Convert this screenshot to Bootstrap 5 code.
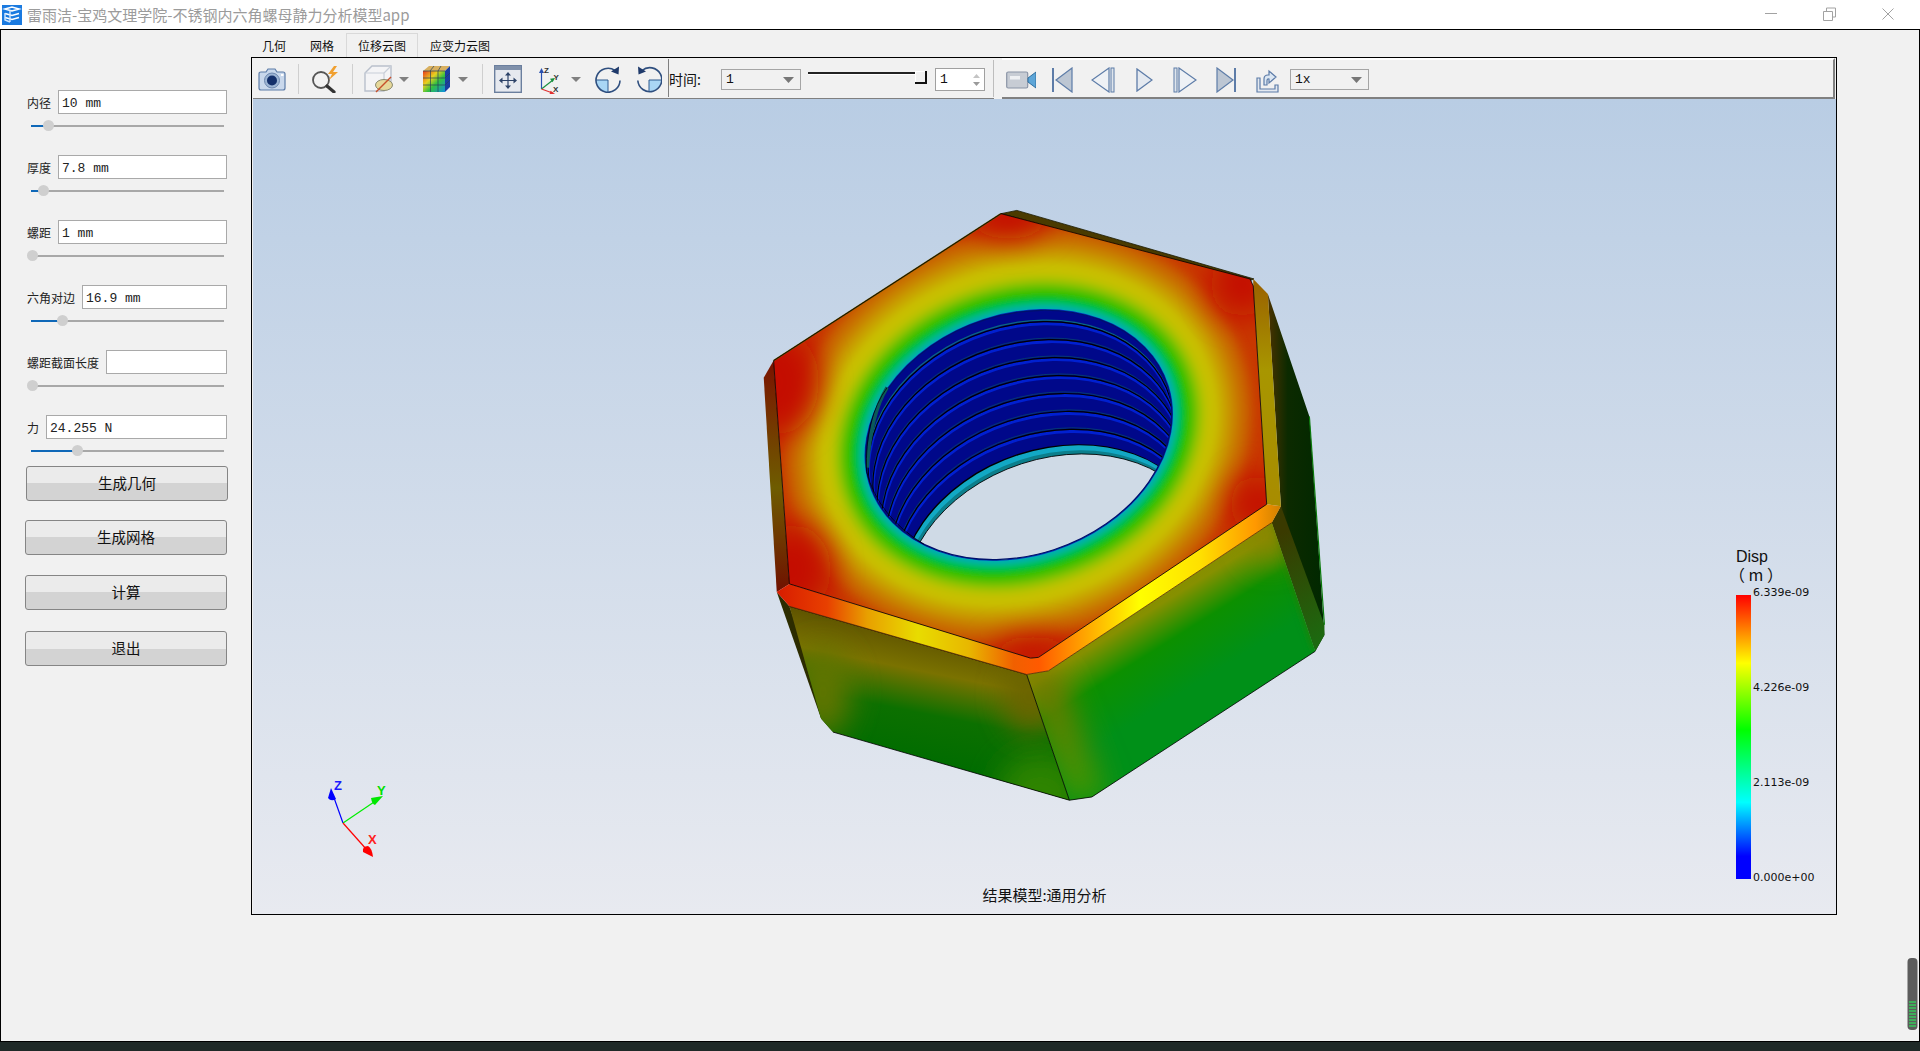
<!DOCTYPE html>
<html lang="zh-CN">
<head>
  <meta charset="UTF-8">
  <title>雷雨洁-宝鸡文理学院-不锈钢内六角螺母静力分析模型app</title>
  <link href="https://cdn.jsdelivr.net/npm/bootstrap@5.3.0/dist/css/bootstrap.min.css" rel="stylesheet">
  <style>
    html, body { height: 100%; }
    body { background: #f1f1f1; overflow: hidden; color: #111; font-family: "Noto Sans CJK SC", "Liberation Sans", sans-serif; font-size: 12px; }
    .app-win { height: 1051px; position: relative; }

    /* title bar */
    .title-bar { height: 29px; background: #fff; color: #9b9b9b; font-size: 15px; padding-left: 2px; }
    .title-bar .ttl { margin-left: 5px; line-height: 29px; white-space: nowrap; }
    .win-btns { margin-left: auto; }
    .win-btns svg { display: block; }

    .app-body { height: 1012px; border: 1px solid #000; border-bottom: 0; background: #f1f1f1; }
    .task-bar { height: 10px; background: #1f2927; border-top: 1px solid #000; }

    /* left form */
    .side-panel { width: 250px; flex: none; padding-top: 60px; }
    .param-row { height: 24px; padding-left: 26px; padding-right: 24px; }
    .param-row label { margin-right: 7px; white-space: nowrap; line-height: 25px; color: #222; }
    .param-row .form-control { height: 24px; min-height: 0; flex: 1 1 0; width: 0; padding: 2px 3px 0; border: 1px solid #a9a9a9; border-radius: 0; font-family: "Liberation Mono", monospace; font-size: 13px; color: #222; }
    .sld { height: 11px; margin: 6px 27px 24px 30px; display: flex; align-items: center; background: linear-gradient(#a8a8a8, #a8a8a8) center / 100% 2px no-repeat; }
    .sld-fill { height: 2px; background: #0f68b8; flex: none; }
    .sld-knob { width: 11px; height: 11px; border-radius: 50%; background: #cfcfcf; margin-left: -5px; flex: none; }
    .two-tone { display: block; width: 202px; height: 35px; padding: 0 0 2px; border: 1px solid #858585; border-radius: 3px; color: #111; font-size: 14.5px; background: linear-gradient(#ebebeb 50%, #d3d3d3 50%); }
    .b1 { margin: -14px 0 0 25px; }
    .b2 { margin: 19px 0 0 24px; }
    .b3 { margin: 20px 0 0 24px; }
    .b4 { margin: 21px 0 0 24px; }

    /* tabs */
    .main-col { width: 1586px; flex: none; }
    .nav-tabs.tab-strip { height: 27px; padding-top: 3px; border: 0; margin-left: -1px; flex-wrap: nowrap; }
    .tab-strip .nav-link { height: 25px; padding: 0 11px; line-height: 23px; font-size: 12px; color: #111; border: 1px solid transparent; border-bottom: 0; border-radius: 0; margin: 0; }
    .tab-strip .nav-link.active { background: #f1f1f1; border-color: #d9d9d9; color: #111; }

    .view-frame { height: 858px; border: 1px solid #000; padding-left: 1px; background: #f1f1f1; }
    .tool-bar { height: 41px; flex: none; }
    .tb-left { border-bottom: 1px solid #808080; height: 100%; padding-top: 2px; }
    .tb-mid { border-bottom: 1px solid #808080; height: 100%; padding-top: 3px; }
    .tb-right { flex: 1 1 0; height: 100%; margin-right: 1px; border-top: 2px solid #fff; border-bottom: 2px solid #808080; border-right: 2px solid #808080; padding-top: 2px; }
    .tb-left svg, .tb-right svg { flex: none; display: block; }
    .tsep { width: 1px; height: 30px; background: #cfcfcf; flex: none; }
    .tsep-dark { width: 1px; height: 100%; margin-top: -2px; background: #808080; flex: none; }
    .tsep-light { width: 1px; height: 100%; margin-top: -3px; background: #bdbdbd; flex: none; }
    .tm4 { margin-left: 4px; } .tm5 { margin-left: 5px; } .tm6 { margin-left: 6px; } .tm7 { margin-left: 7px; }
    .tm8 { margin-left: 8px; } .tm9 { margin-left: 9px; } .tm10 { margin-left: 10px; } .tm11 { margin-left: 11px; }
    .tm12 { margin-left: 12px; } .tm14 { margin-left: 14px; } .tm16 { margin-left: 16px; } .tm18 { margin-left: 18px; }
    .tm19 { margin-left: 19px; } .tm20 { margin-left: 20px; } .tm21 { margin-left: 21px; }
    .time-lbl { font-size: 14px; white-space: nowrap; width: 42px; flex: none; }
    .form-select.tb-combo { height: 21px; min-height: 0; flex: none; padding: 0 0 0 4px; border: 1px solid #a5a5a5; border-radius: 0; font-family: "Liberation Mono", monospace; font-size: 13px; line-height: 19px; color: #111; background-color: #f1f1f1; background-position: right 6px center; background-size: 11px 6px; background-image: url("data:image/svg+xml,%3csvg xmlns='http://www.w3.org/2000/svg' viewBox='0 0 11 6'%3e%3cpath fill='%23777' d='M0 0h11L5.500 6z'/%3e%3c/svg%3e"); }
    .combo-a { width: 80px; }
    .combo-b { width: 79px; }
    .time-slider { width: 119px; height: 14px; flex: none; display: flex; align-self: center; margin-top: -3px; }
    .time-groove { flex: 1 1 0; height: 2px; margin-top: 1px; background: #222; box-shadow: 0 1px 0 #fff; }
    .time-handle { width: 12px; height: 13px; background: #f1f1f1; border-right: 2px solid #111; border-bottom: 2px solid #111; box-shadow: inset 1px 1px 0 #fff; }
    .spin-box { width: 50px; height: 23px; flex: none; background: #fff; border: 1px solid #a0a0a0; padding-left: 4px; font-family: "Liberation Mono", monospace; font-size: 13px; line-height: 22px; }

    /* 3d view */
    .view-canvas { flex: 1 1 0; position: relative; overflow: hidden; background: linear-gradient(#b9cde4, #e8eaf0); }
    .nut-svg { position: absolute; left: 487px; top: 91px; }
    .triad-svg { position: absolute; left: 50px; top: 670px; }
    .legend-box { position: absolute; left: 1483px; top: 449px; color: #111; }
    .legend-ttl { font-family: "Liberation Sans", sans-serif; font-size: 16px; line-height: 18px; height: 17px; white-space: nowrap; }
    .legend-unit { font-family: "Noto Sans CJK SC", sans-serif; margin-left: -7px; }
    .legend-bar { width: 15px; height: 284px; margin-top: 13px; flex: none; background: linear-gradient(#f00 0%, #ff0 24%, #0f0 47.5%, #0ff 73%, #00f 92%, #00f 100%); }
    .legend-vals { height: 297px; margin: 5px 0 0 2px; font-family: "DejaVu Sans", sans-serif; font-size: 11px; line-height: 12px; white-space: nowrap; }
    .view-cap { position: absolute; left: 0; right: 0; top: 787px; text-align: center; font-size: 15px; line-height: 18px; color: #111; }
    .side-widget { position: absolute; right: 2px; top: 958px; }
  </style>
</head>
<body>
<div class="app-win d-flex flex-column">

  <div class="title-bar d-flex align-items-center">
    <svg width="20" height="20" viewBox="0 0 20 20">
      <rect width="20" height="20" fill="#1a7ae0"/>
      <path d="M3 4l7-2 7 2-7 2zM3 8.500l7 2 7-2M3 12.500l7 2 7-2" fill="none" stroke="#fff" stroke-width="1.600"/>
      <path d="M8 5v12M3 8v7l5 2" fill="none" stroke="#cfe6ff" stroke-width="1.400"/>
    </svg>
    <span class="ttl">雷雨洁-宝鸡文理学院-不锈钢内六角螺母静力分析模型app</span>
    <svg class="win-btns" width="155" height="29" viewBox="0 0 155 29">
      <g fill="none" stroke="#a2a2a2" stroke-width="1">
        <path d="M0 13.500h12"/>
        <path d="M58.500 11.500h9v9h-9zM61.500 11v-3h9v9h-3"/>
        <path d="M117.500 8.500l11 11M128.500 8.500l-11 11"/>
      </g>
    </svg>
  </div>

  <div class="app-body d-flex">
    <form class="side-panel">
      <div class="param-row d-flex"><label>内径</label><input class="form-control" value="10 mm"></div>
      <div class="sld"><div class="sld-fill" style="width:17px"></div><span class="sld-knob"></span></div>

      <div class="param-row d-flex"><label>厚度</label><input class="form-control" value="7.8 mm"></div>
      <div class="sld"><div class="sld-fill" style="width:12px"></div><span class="sld-knob"></span></div>

      <div class="param-row d-flex"><label>螺距</label><input class="form-control" value="1 mm"></div>
      <div class="sld"><div class="sld-fill" style="width:1px"></div><span class="sld-knob"></span></div>

      <div class="param-row d-flex"><label>六角对边</label><input class="form-control" value="16.9 mm"></div>
      <div class="sld"><div class="sld-fill" style="width:31px"></div><span class="sld-knob"></span></div>

      <div class="param-row d-flex"><label>螺距截面长度</label><input class="form-control" value=""></div>
      <div class="sld"><div class="sld-fill" style="width:1px"></div><span class="sld-knob"></span></div>

      <div class="param-row d-flex"><label>力</label><input class="form-control" value="24.255 N"></div>
      <div class="sld"><div class="sld-fill" style="width:46px"></div><span class="sld-knob"></span></div>

      <button type="button" class="btn two-tone b1">生成几何</button>
      <button type="button" class="btn two-tone b2">生成网格</button>
      <button type="button" class="btn two-tone b3">计算</button>
      <button type="button" class="btn two-tone b4">退出</button>
    </form>

    <div class="main-col d-flex flex-column">
      <ul class="nav nav-tabs tab-strip">
        <li class="nav-item"><a class="nav-link" href="#">几何</a></li>
        <li class="nav-item"><a class="nav-link" href="#">网格</a></li>
        <li class="nav-item"><a class="nav-link active" href="#">位移云图</a></li>
        <li class="nav-item"><a class="nav-link" href="#">应变力云图</a></li>
      </ul>

      <div class="view-frame d-flex flex-column">
        <div class="tool-bar d-flex">
          <div class="tb-left d-flex align-items-center">
            <!-- camera -->
            <svg class="tm5" width="28" height="23" viewBox="0 0 28 23">
              <path d="M1 6q0-2 2-2h5l2-3h7l2 3h6q2 0 2 2v14q0 2-2 2H3q-2 0-2-2z" fill="#c9d8ec" stroke="#5d7ca8" stroke-width="1.200"/>
              <circle cx="14" cy="12.500" r="7.500" fill="#9db5d4" stroke="#6d87ae"/>
              <circle cx="14" cy="12.500" r="5" fill="#14306b"/>
              <rect x="23" y="6" width="2.500" height="2" fill="#fff"/>
            </svg>
            <div class="tsep tm12"></div>
            <!-- query -->
            <svg class="tm12" width="29" height="27" viewBox="0 0 29 27">
              <circle cx="10" cy="14" r="8" fill="#f2f2f2" stroke="#555" stroke-width="1.800"/>
              <path d="M16 20l7 6" stroke="#333" stroke-width="3.200" stroke-linecap="round"/>
              <path d="M23 0l-6 8h4l-3 6 9-8h-5l4-6z" fill="#f0a030"/>
            </svg>
            <div class="tsep tm12"></div>
            <!-- hide box -->
            <svg class="tm11" width="29" height="28" viewBox="0 0 29 28">
              <path d="M1 8l7-7h19v17l-7 8H1z" fill="#f4f4f6" stroke="#b9c0cc" stroke-width="1.400"/>
              <path d="M1 8h19v18M20 8l7-7" fill="none" stroke="#c8ced8" stroke-width="1.200"/>
              <ellipse cx="20" cy="20" rx="8.500" ry="5.500" fill="#e6d89a" stroke="#8a8a70"/>
              <path d="M12 27L27 12" stroke="#c8502a" stroke-width="1.500"/>
            </svg>
            <svg class="tm6" width="10" height="5" viewBox="0 0 10 5"><path d="M0 0h10L5 5z" fill="#808080"/></svg>
            <!-- contour cube -->
            <svg class="tm14" width="27" height="28" viewBox="0 0 27 28">
              <defs><linearGradient id="cubeFill" x1="0" y1="0" x2="1" y2="1"><stop offset="0" stop-color="#e83a1a"/><stop offset=".35" stop-color="#e8d020"/><stop offset=".6" stop-color="#30c040"/><stop offset="1" stop-color="#1090e0"/></linearGradient></defs>
              <path d="M6 1h21l-5 5H0z" fill="#d8b060"/>
              <path d="M22 6l5-5v21l-5 5z" fill="#1a3ea0"/>
              <rect x="0" y="6" width="22" height="21" fill="url(#cubeFill)"/>
              <path d="M7.500 6V27M15 6V27M0 13h22M0 20h22M0 6h22M11 1l-4 5M18 1l-3 5M22 13l5-5M22 20l5-5" fill="none" stroke="#27405a" stroke-width=".7"/>
            </svg>
            <svg class="tm8" width="10" height="5" viewBox="0 0 10 5"><path d="M0 0h10L5 5z" fill="#808080"/></svg>
            <div class="tsep tm14"></div>
            <!-- fit -->
            <svg class="tm11" width="28" height="28" viewBox="0 0 28 28">
              <rect x=".7" y=".7" width="26.600" height="26.600" fill="#e6e9ef" stroke="#6b7f9e" stroke-width="1.400"/>
              <rect x="1" y="1" width="26" height="4" fill="#7f90aa"/>
              <path d="M14 8v15M6.500 15.500h15" stroke="#2d4368" stroke-width="1.200"/>
              <path d="M14 7l-3 3.500h6zM14 24l-3-3.500h6zM5 15.500L8.500 12.500v6zM23 15.500l-3.500-3v6z" fill="#2d4368"/>
            </svg>
            <!-- axes -->
            <svg class="tm16" width="24" height="29" viewBox="0 0 24 29" font-family="Liberation Sans, sans-serif" font-size="8" font-weight="bold" fill="#333">
              <path d="M3.500 24V6" stroke="#2a50b0" stroke-width="1.200"/><path d="M3.500 3l-2.500 5h5z" fill="#2a50b0"/>
              <path d="M3.500 24L15 15" stroke="#1a9040" stroke-width="1.200"/><path d="M17 13l-5 .8 2.500 3.500z" fill="#1a9040"/>
              <path d="M3.500 24l11 4" stroke="#e03030" stroke-width="1.200"/><path d="M17 28.700l-4.500-3-1 3.700z" fill="#e03030"/>
              <text x="6" y="8">Z</text><text x="15.500" y="15">Y</text><text x="15" y="26.500">X</text>
            </svg>
            <svg class="tm9" width="10" height="5" viewBox="0 0 10 5"><path d="M0 0h10L5 5z" fill="#808080"/></svg>
            <!-- rotate cw -->
            <svg class="tm14" width="26" height="27" viewBox="0 0 26 27">
              <path d="M1 14h12v12a12 12 0 0 1-12-12z" fill="#a9d6f5"/>
              <path d="M1 14h12v12" fill="none" stroke="#2f5a8f"/>
              <path d="M20 4.500A12 12 0 1 0 25 14.500" fill="none" stroke="#2f4f7f" stroke-width="1.600"/>
              <path d="M24 .5l-.5 8-7.500-3z" fill="#1f3a6b"/>
            </svg>
            <!-- rotate ccw -->
            <svg class="tm16" width="25" height="27" viewBox="0 0 25 27">
              <path d="M24 14H12v12a12 12 0 0 0 12-12z" fill="#a9d6f5"/>
              <path d="M24 14H12v12" fill="none" stroke="#2f5a8f"/>
              <path d="M5 4.500A12 12 0 1 1 0.800 14.500" fill="none" stroke="#2f4f7f" stroke-width="1.600"/>
              <path d="M1 .5l.5 8 7.500-3z" fill="#1f3a6b"/>
            </svg>
            <div class="tsep-dark tm6"></div>
          </div>

          <div class="tb-mid d-flex align-items-center flex-none">
            <span class="time-lbl">时间:</span>
            <select class="form-select tb-combo combo-a tm10"><option>1</option></select>
            <div class="time-slider tm7"><div class="time-groove"></div><div class="time-handle"></div></div>
            <div class="spin-box d-flex justify-content-between tm8">1
              <svg class="me-1 mt-1" width="7" height="14" viewBox="0 0 7 14"><path d="M3.500 1L7 5H0z" fill="#c4c4c4"/><path d="M0 9h7l-3.500 4z" fill="#9a9a9a"/></svg>
            </div>
            <div class="tsep-light tm8"></div>
          </div>

          <div class="tb-right d-flex align-items-center tm8">
            <!-- record -->
            <svg class="tm4" width="30" height="20" viewBox="0 0 30 20">
              <rect x=".7" y="2" width="21" height="16" rx="1.500" fill="#c7ccd4" stroke="#8a94a6" stroke-width="1.200"/>
              <rect x="4" y="6" width="10" height="3.500" fill="#eef0f3"/>
              <path d="M22 8l8-6v16l-8-6z" fill="#5ea6d8" stroke="#2f6f9f"/>
            </svg>
            <!-- first -->
            <svg class="tm16" width="21" height="26" viewBox="0 0 21 26">
              <path d="M1 1v24" stroke="#5d7ca8" stroke-width="2"/>
              <path d="M20 1v24L4 13z" fill="#bcc6d3" stroke="#5d7ca8" stroke-width="1.200"/>
            </svg>
            <!-- prev -->
            <svg class="tm18" width="24" height="26" viewBox="0 0 24 26">
              <path d="M18 1v24L1 13z" fill="#eef1f5" stroke="#5d7ca8" stroke-width="1.200"/>
              <rect x="20" y="1" width="3" height="24" fill="#dfe5ec" stroke="#5d7ca8"/>
            </svg>
            <!-- play -->
            <svg class="tm21" width="17" height="24" viewBox="0 0 17 24">
              <path d="M1 1v22l15-11z" fill="#e4e9f0" stroke="#5d7ca8" stroke-width="1.300"/>
            </svg>
            <!-- next -->
            <svg class="tm20" width="24" height="26" viewBox="0 0 24 26">
              <rect x="1" y="1" width="3" height="24" fill="#dfe5ec" stroke="#5d7ca8"/>
              <path d="M6 1v24l17-12z" fill="#eef1f5" stroke="#5d7ca8" stroke-width="1.200"/>
            </svg>
            <!-- last -->
            <svg class="tm19" width="20" height="26" viewBox="0 0 20 26">
              <path d="M1 1v24l16-12z" fill="#bcc6d3" stroke="#5d7ca8" stroke-width="1.200"/>
              <path d="M19 1v24" stroke="#5d7ca8" stroke-width="2"/>
            </svg>
            <!-- export -->
            <svg class="tm20" width="23" height="26" viewBox="0 0 23 26">
              <path d="M4 11H1v14h21v-7h-3v4H4z" fill="#e4e9f0" stroke="#5d7ca8" stroke-width="1.200"/>
              <path d="M8 18v-6q0-4 4-4h1V4l7 6-7 6v-4q-2-.5-2 2v4z" fill="#dbe6f2" stroke="#5d7ca8" stroke-width="1.200"/>
            </svg>
            <select class="form-select tb-combo combo-b tm11"><option>1x</option></select>
          </div>
        </div>

        <div class="view-canvas">
          <!-- nut, drawn in the coordinates of the zoomed crop -->
          <svg class="nut-svg" width="620" height="640" viewBox="0 0 1568 1568" preserveAspectRatio="none">
            <defs>
              <filter id="soft" filterUnits="userSpaceOnUse" x="-100" y="-100" width="1800" height="1800"><feGaussianBlur stdDeviation="11"/></filter>
              <filter id="softer" filterUnits="userSpaceOnUse" x="-100" y="-100" width="1800" height="1800"><feGaussianBlur stdDeviation="38"/></filter>
              <clipPath id="faceClip"><path d="M85 418L660 58 1290 218 1298 235 1332 770 755 1145 735 1147 125 965z"/></clipPath>
              <clipPath id="holeClip"><ellipse cx="705" cy="600" rx="395" ry="295" transform="rotate(-17.500 705 600)"/></clipPath>
              <clipPath id="frontL"><path d="M125 1020L725 1187 833 1495 235 1328 205 1295z"/></clipPath>
              <clipPath id="frontR"><path d="M725 1187L780 1178 1345 815 1455 1130 890 1487 833 1495z"/></clipPath>
              <ellipse id="holeE" cx="705" cy="600" rx="395" ry="295" transform="rotate(-17.500 705 600)"/>
              <linearGradient id="chamferLow" gradientUnits="userSpaceOnUse" x1="93" y1="0" x2="1368" y2="0">
                <stop offset="0" stop-color="#d81c00"/><stop offset=".1" stop-color="#e84000"/><stop offset=".18" stop-color="#e8a000"/><stop offset=".28" stop-color="#e8dc00"/><stop offset=".38" stop-color="#e8b800"/><stop offset=".47" stop-color="#f06000"/><stop offset=".52" stop-color="#ff5a00"/><stop offset=".6" stop-color="#ff9c00"/><stop offset=".72" stop-color="#ffff00"/><stop offset=".84" stop-color="#ffe000"/><stop offset=".95" stop-color="#ff9800"/><stop offset="1" stop-color="#d08000"/>
              </linearGradient>
              <linearGradient id="chamferLeft" x1="0" y1="0" x2="0" y2="1"><stop offset="0" stop-color="#7a1200"/><stop offset=".55" stop-color="#6e5c00"/><stop offset="1" stop-color="#701000"/></linearGradient>
              <linearGradient id="chamferRight" x1="0" y1="0" x2="0" y2="1"><stop offset="0" stop-color="#9a6000"/><stop offset=".4" stop-color="#a89600"/><stop offset="1" stop-color="#a88c00"/></linearGradient>
              <linearGradient id="darkFace" x1="0" y1="0" x2="1" y2="0"><stop offset="0" stop-color="#4a3200"/><stop offset=".35" stop-color="#0c2a00"/><stop offset="1" stop-color="#002800"/></linearGradient>
              <linearGradient id="darkStrip" gradientUnits="userSpaceOnUse" x1="1350" y1="850" x2="1480" y2="1100"><stop offset="0" stop-color="#3a3a00"/><stop offset="1" stop-color="#1c6a10"/></linearGradient>
              <linearGradient id="faceL" gradientUnits="userSpaceOnUse" x1="500" y1="1090" x2="440" y2="1400"><stop offset="0" stop-color="#5e5200"/><stop offset=".3" stop-color="#7a7200"/><stop offset=".62" stop-color="#0c7000"/><stop offset="1" stop-color="#006c00"/></linearGradient>
              <linearGradient id="faceR" gradientUnits="userSpaceOnUse" x1="950" y1="950" x2="1120" y2="1230"><stop offset="0" stop-color="#8e8800"/><stop offset=".35" stop-color="#869000"/><stop offset=".62" stop-color="#0c9000"/><stop offset="1" stop-color="#009018"/></linearGradient>
              <linearGradient id="midStrip" gradientUnits="userSpaceOnUse" x1="0" y1="1190" x2="0" y2="1495"><stop offset="0" stop-color="#7a7000"/><stop offset="1" stop-color="#3f9a00"/></linearGradient>
            </defs>

            <!-- sides -->
            <path d="M1335 255L1440 555 1478 1090 1455 1130 1345 815 1368 775z" fill="url(#darkFace)"/>
            <path d="M1345 815L1368 775 1478 1065 1478 1090 1455 1130z" fill="url(#darkStrip)"/>
            <path d="M1440 555L1478 1065" stroke="#0a7a0a" stroke-width="3" fill="none"/>
            <path d="M93 985L125 1020 235 1328 205 1295z" fill="#2c2c00"/>

            <path d="M125 1020L725 1187 833 1495 235 1328 205 1295z" fill="url(#faceL)"/>
            <g clip-path="url(#frontL)">
              <ellipse cx="760" cy="1480" rx="110" ry="100" fill="#2f8400" filter="url(#softer)"/>
              <ellipse cx="730" cy="1240" rx="60" ry="90" fill="#6a6400" filter="url(#softer)"/>
              <ellipse cx="210" cy="1230" rx="70" ry="110" fill="#627400" filter="url(#softer)"/>
            </g>
            <path d="M725 1187L780 1178 1345 815 1455 1130 890 1487 833 1495z" fill="url(#faceR)"/>
            <g clip-path="url(#frontR)">
              <path d="M715 1187L800 1178 930 1495 825 1495z" fill="url(#midStrip)" filter="url(#softer)"/>
              <path d="M1345 815L1370 810 1475 1110 1455 1130z" fill="#2a7c10" filter="url(#soft)"/>
              <ellipse cx="1340" cy="850" rx="50" ry="60" fill="#8a8400" filter="url(#softer)"/>
            </g>
            <path d="M125 1020L725 1187 833 1495 235 1328M833 1495L890 1487 1455 1130" fill="none" stroke="#000" stroke-width="2"/>

            <!-- chamfers -->
            <path d="M660 58L700 50 1300 218 1290 222z" fill="#4a3a00" stroke="#1a1a00" stroke-width="2"/>
            <path d="M85 418L60 460 93 985 125 965z" fill="url(#chamferLeft)"/>
            <path d="M1298 218L1335 255 1368 775 1332 770 1298 235z" fill="url(#chamferRight)"/>
            <path d="M125 965L735 1147 755 1145 1332 770 1368 775 1345 815 780 1178 725 1187 125 1020 93 985z" fill="url(#chamferLow)"/>
            <path d="M125 1020L725 1187 780 1178 1345 815" fill="none" stroke="#5a2a00" stroke-width="2"/>

            <!-- top face contour -->
            <g clip-path="url(#faceClip)">
              <rect width="1568" height="1568" fill="#c83800"/>
              <g filter="url(#soft)">
                <ellipse cx="705" cy="600" rx="605" ry="505" fill="#c85000" transform="rotate(-17.500 705 600)"/>
                <ellipse cx="705" cy="600" rx="585" ry="485" fill="#c86c00" transform="rotate(-17.500 705 600)"/>
                <ellipse cx="705" cy="600" rx="560" ry="460" fill="#c88800" transform="rotate(-17.500 705 600)"/>
                <ellipse cx="705" cy="600" rx="538" ry="438" fill="#c8a400" transform="rotate(-17.500 705 600)"/>
                <ellipse cx="705" cy="600" rx="515" ry="415" fill="#c8c000" transform="rotate(-17.500 705 600)"/>
                <ellipse cx="705" cy="600" rx="480" ry="380" fill="#a8c400" transform="rotate(-17.500 705 600)"/>
                <ellipse cx="705" cy="600" rx="462" ry="362" fill="#60c000" transform="rotate(-17.500 705 600)"/>
                <ellipse cx="705" cy="600" rx="442" ry="342" fill="#00c000" transform="rotate(-17.500 705 600)"/>
                <ellipse cx="705" cy="600" rx="420" ry="320" fill="#00c040" transform="rotate(-17.500 705 600)"/>
                <ellipse cx="705" cy="600" rx="409" ry="309" fill="#00c0a0" transform="rotate(-17.500 705 600)"/>
                <ellipse cx="705" cy="600" rx="402" ry="302" fill="#00a0c8" transform="rotate(-17.500 705 600)"/>
              </g>
              <g fill="#c41000" filter="url(#softer)">
                <ellipse cx="680" cy="60" rx="100" ry="60"/>
                <ellipse cx="1270" cy="230" rx="80" ry="80"/>
                <ellipse cx="1310" cy="770" rx="70" ry="70"/>
                <ellipse cx="740" cy="1140" rx="100" ry="45"/>
                <ellipse cx="130" cy="930" rx="100" ry="110"/>
                <ellipse cx="90" cy="470" rx="110" ry="130"/>
              </g>
              <use href="#holeE" fill="#0030b8" stroke="#0030b8" stroke-width="6"/>
            </g>
            <path d="M85 418L660 58" fill="none" stroke="#6a5400" stroke-width="4"/>
            <path d="M85 418L660 58M660 58L1290 218 1298 235 1332 770 755 1145 735 1147 125 965 85 418" fill="none" stroke="#000" stroke-width="2"/>

            <!-- threads inside the bore -->
            <g clip-path="url(#holeClip)">
              <rect width="1568" height="1568" fill="#00088a"/>
              <g fill="none">
                <use href="#holeE" transform="translate(5 24)" stroke="#0a6a80" stroke-width="3"/>
                <use href="#holeE" transform="translate(7 33)" stroke="#0020d0" stroke-width="7"/>
                <use href="#holeE" transform="translate(6 28)" stroke="#000" stroke-width="3"/>
                <use href="#holeE" transform="translate(17 68)" stroke="#064070" stroke-width="2"/>
                <use href="#holeE" transform="translate(19 77)" stroke="#0020d0" stroke-width="7"/>
                <use href="#holeE" transform="translate(18 72)" stroke="#000" stroke-width="3"/>
                <use href="#holeE" transform="translate(28 112)" stroke="#064070" stroke-width="2"/>
                <use href="#holeE" transform="translate(30 121)" stroke="#0020d0" stroke-width="7"/>
                <use href="#holeE" transform="translate(29 116)" stroke="#000" stroke-width="3"/>
                <use href="#holeE" transform="translate(39 156)" stroke="#064070" stroke-width="2"/>
                <use href="#holeE" transform="translate(41 165)" stroke="#0020d0" stroke-width="7"/>
                <use href="#holeE" transform="translate(40 160)" stroke="#000" stroke-width="3"/>
                <use href="#holeE" transform="translate(50 200)" stroke="#064070" stroke-width="2"/>
                <use href="#holeE" transform="translate(52 209)" stroke="#0020d0" stroke-width="7"/>
                <use href="#holeE" transform="translate(51 204)" stroke="#000" stroke-width="3"/>
                <use href="#holeE" transform="translate(61 244)" stroke="#064070" stroke-width="2"/>
                <use href="#holeE" transform="translate(63 253)" stroke="#0020d0" stroke-width="7"/>
                <use href="#holeE" transform="translate(62 248)" stroke="#000" stroke-width="3"/>
                <use href="#holeE" transform="translate(72 288)" stroke="#064070" stroke-width="2"/>
                <use href="#holeE" transform="translate(74 297)" stroke="#0020d0" stroke-width="7"/>
                <use href="#holeE" transform="translate(73 292)" stroke="#000" stroke-width="3"/>
              </g>
              <use href="#holeE" transform="translate(86 328)" fill="#000"/>
              <use href="#holeE" transform="translate(88 331)" fill="#12a8c4"/>
              <use href="#holeE" transform="translate(92 343)" fill="#0c7f8c"/>
              <use href="#holeE" transform="translate(96 352)" fill="#cfdae6" stroke="#000" stroke-width="2"/>
            </g>
            <use href="#holeE" fill="none" stroke="#00106a" stroke-width="3"/>
            <path d="M372 484Q330 550 322 680" fill="none" stroke="#0b5a58" stroke-width="9"/>
            <path d="M372 484Q315 560 320 690Q350 800 465 868" fill="none" stroke="#000" stroke-width="1.800"/>
          </svg>

          <!-- orientation triad -->
          <svg class="triad-svg" width="90" height="100" viewBox="0 0 90 100" font-family="Liberation Sans, sans-serif" font-size="13" font-weight="bold">
            <path d="M40 54L30 26" stroke="#0000ff" stroke-width="1.200"/>
            <path d="M28 19l-3 10q3 4 8 1z" fill="#0000ff"/>
            <path d="M40 54l34-23" stroke="#00ee00" stroke-width="1.200"/>
            <path d="M80 27l-12 2q1 6 4 7z" fill="#00e800"/>
            <path d="M40 54l24 27" stroke="#ff0000" stroke-width="1.200"/>
            <path d="M70 88l-10-5q-1-6 5-6 4 2 5 11z" fill="#ff0000"/>
            <text x="31" y="21" fill="#1a1aff">Z</text>
            <text x="74" y="26" fill="#00e000">Y</text>
            <text x="65" y="75" fill="#ff2020">X</text>
          </svg>

          <!-- colour legend -->
          <div class="legend-box">
            <div class="legend-ttl">Disp</div>
            <div class="legend-ttl"><span class="legend-unit">（ m ）</span></div>
            <div class="d-flex align-items-start">
              <div class="legend-bar"></div>
              <div class="legend-vals d-flex flex-column justify-content-between">
                <span>6.339e-09</span><span>4.226e-09</span><span>2.113e-09</span><span>0.000e+00</span>
              </div>
            </div>
          </div>

          <div class="view-cap">结果模型:通用分析</div>
        </div>
      </div>
    </div>
  </div>

  <div class="task-bar"></div>

  <svg class="side-widget" width="11" height="73" viewBox="0 0 11 73">
    <rect x=".5" y="0" width="10" height="72" rx="4" fill="#5c5c5c"/>
    <path d="M2 44h7M2 47h7M2 50h7M2 53h7M2 56h7M2 59h7M2 62h7M2 65h7M2 68h7" stroke="#36c85a" stroke-width="1.300"/>
  </svg>
</div>
</body>
</html>
